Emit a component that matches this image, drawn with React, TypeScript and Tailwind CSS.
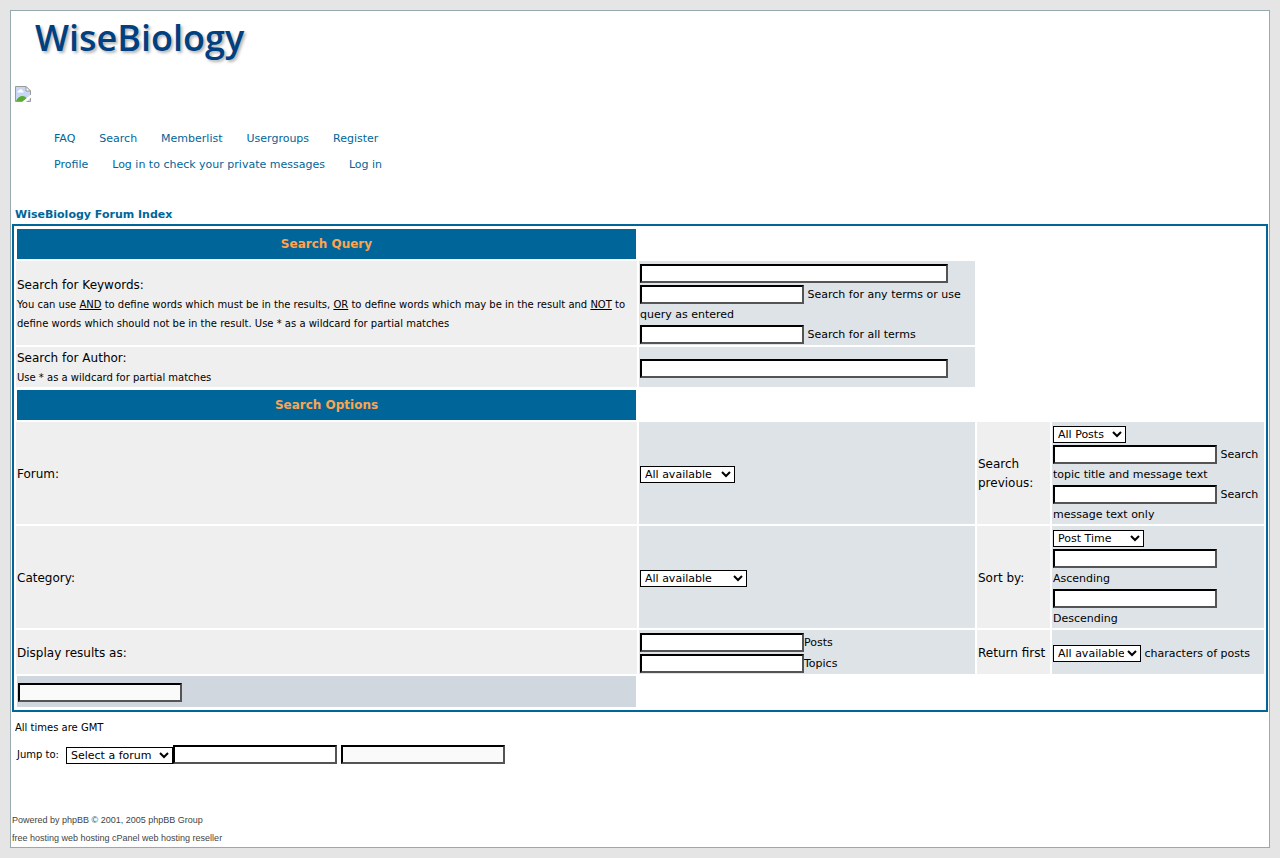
import type { ReactNode } from "react";

const inset =
  "my-px h-[19px] rounded-none border-2 border-t-black border-l-black border-r-[#545454] border-b-[#545454] px-px text-[11px] leading-[13px] align-baseline";
const select =
  "mt-[2px] mb-px h-[17px] rounded-none border border-black bg-white text-[11px] leading-[15px] align-baseline";
const nav = "text-[11px] text-[#006699] hover:underline";

function TextField({ id, label, wide, muted }: { id: string; label?: string; wide?: boolean; muted?: boolean }) {
  return (
    <input
      id={id}
      type="text"
      aria-label={label}
      className={`${inset} ${wide ? "w-[308px] max-w-full" : "w-[164px]"} ${muted ? "bg-[#fafafa]" : "bg-white"}`}
    />
  );
}

function HeadRow({ children }: { children: ReactNode }) {
  return (
    <tr>
      <th
        scope="colgroup"
        className="h-[31px] border border-b-0 border-white bg-[#006699] p-0 text-center text-[12px] font-bold text-[#ffa34f]"
      >
        {children}
      </th>
    </tr>
  );
}

function Cell({ light, children }: { light?: boolean; children: ReactNode }) {
  return (
    <td
      className={`px-px pt-[2px] pb-0 align-middle ${light ? "bg-[#efefef] text-[12px]" : "bg-[#dee3e7] text-[11px]"}`}
    >
      {children}
    </td>
  );
}

export default function App() {
  return (
    <div className="min-h-screen bg-[#e5e5e5] p-[10px] font-[Verdana,'DejaVu_Sans',sans-serif] text-[11px] leading-[19px] text-black">
      <div className="border border-[#98aab1] bg-white px-px">
        <header className="px-[3px]">
          <h1 className="pt-1 pl-5 font-['Trebuchet_MS','Open_Sans',sans-serif] text-[36px] leading-[46px] font-semibold text-[#004080] [text-shadow:2px_2px_3px_rgba(0,0,0,0.3)]">
            WiseBiology
          </h1>
          <a href="#index" aria-label="WiseBiology Forum Index" className="mt-[25px] block w-4">
            <svg width="16" height="16" viewBox="0 0 16 16">
              <path d="M.5.5H11L15.500 5v10.500H.5z" fill="#c6d6f4" stroke="#9a9a9a" />
              <path d="M2.500 6.500Q2 4.500 4 4.500Q4.500 3 6 3.200Q7.500 3.500 7.500 4.700Q9 5 8.500 6.500z" fill="#fff" />
              <path d="M1 15q2.500-5 6.500-5q3 0 4.500 3v2z" fill="#58ab32" />
              <path d="M11 .5V5h4.500z" fill="#fff" stroke="#9a9a9a" />
              <path d="M16 8.500v3L11 16H7z" fill="#fff" />
            </svg>
          </a>
          <nav className="mt-[23px] pl-[39px]">
            <div className="flex h-[26px] items-center gap-6">
              <a href="#faq" className={nav}>FAQ</a>
              <a href="#search" className={nav}>Search</a>
              <a href="#members" className={nav}>Memberlist</a>
              <a href="#groups" className={nav}>Usergroups</a>
              <a href="#register" className={nav}>Register</a>
            </div>
            <div className="flex h-[26px] items-center gap-6">
              <a href="#profile" className={nav}>Profile</a>
              <a href="#messages" className={nav}>Log in to check your private messages</a>
              <a href="#login" className={nav}>Log in</a>
            </div>
          </nav>
          <a href="#index" className="mt-7 block w-fit font-bold text-[#006699]">WiseBiology Forum Index</a>
        </header>

        <main>
          <form className="border-2 border-[#006699]">
            <table className="w-full table-fixed border-separate border-spacing-[2px]">
              <colgroup>
                <col />
                <col className="w-[336px]" />
                <col className="w-[73px]" />
                <col className="w-[212px]" />
              </colgroup>
              <tbody>
                <HeadRow>Search Query</HeadRow>
                <tr className="h-[84px]">
                  <Cell light>
                    <label htmlFor="keywords">Search for Keywords:</label>
                    <p className="text-[10px]">
                      You can use <u>AND</u> to define words which must be in the results, <u>OR</u> to define words
                      which may be in the result and <u>NOT</u> to define words which should not be in the result. Use
                      * as a wildcard for partial matches
                    </p>
                  </Cell>
                  <Cell>
                    <TextField id="keywords" wide />
                    <br />
                    <TextField id="any" /> <label htmlFor="any">Search for any terms or use query as entered</label>
                    <br />
                    <TextField id="all" /> <label htmlFor="all">Search for all terms</label>
                  </Cell>
                </tr>
                <tr className="h-[40px]">
                  <Cell light>
                    <label htmlFor="author">Search for Author:</label>
                    <p className="text-[10px]">Use * as a wildcard for partial matches</p>
                  </Cell>
                  <Cell>
                    <TextField id="author" wide />
                  </Cell>
                </tr>
                <HeadRow>Search Options</HeadRow>
                <tr className="h-[102px]">
                  <Cell light>
                    <label htmlFor="forum">Forum:</label>
                  </Cell>
                  <Cell>
                    <select id="forum" className={`${select} w-[95px]`}>
                      <option>All available</option>
                    </select>
                  </Cell>
                  <Cell light>
                    <label htmlFor="previous">Search previous:</label>
                  </Cell>
                  <Cell>
                    <select id="previous" className={`${select} w-[73px]`}>
                      <option>All Posts</option>
                    </select>
                    <br />
                    <TextField id="title" /> <label htmlFor="title">Search topic title and message text</label>
                    <br />
                    <TextField id="message" /> <label htmlFor="message">Search message text only</label>
                  </Cell>
                </tr>
                <tr className="h-[102px]">
                  <Cell light>
                    <label htmlFor="category">Category:</label>
                  </Cell>
                  <Cell>
                    <select id="category" className={`${select} w-[107px]`}>
                      <option>All available</option>
                    </select>
                  </Cell>
                  <Cell light>
                    <label htmlFor="sort">Sort by:</label>
                  </Cell>
                  <Cell>
                    <select id="sort" className={`${select} w-[91px]`}>
                      <option>Post Time</option>
                    </select>
                    <br />
                    <TextField id="asc" /> <label htmlFor="asc">Ascending</label>
                    <br />
                    <TextField id="desc" /> <label htmlFor="desc">Descending</label>
                  </Cell>
                </tr>
                <tr className="h-[44px]">
                  <Cell light>Display results as:</Cell>
                  <Cell>
                    <TextField id="posts" />
                    <label htmlFor="posts">Posts</label>
                    <br />
                    <TextField id="topics" />
                    <label htmlFor="topics">Topics</label>
                  </Cell>
                  <Cell light>
                    <label htmlFor="chars" className="whitespace-nowrap">Return first</label>
                  </Cell>
                  <Cell>
                    <select id="chars" className={`${select} w-[88px]`}>
                      <option>All available</option>
                    </select>{" "}
                    characters of posts
                  </Cell>
                </tr>
                <tr>
                  <td className="h-[32px] border border-t-0 border-white bg-[#d1d7de] px-px pt-[2px] pb-0 align-middle">
                    <TextField id="submit" label="Search" muted />
                  </td>
                </tr>
              </tbody>
            </table>
          </form>

          <p className="mt-[6px] px-[3px] text-[10px]">All times are GMT</p>
          <form className="mt-[7px] flex items-center px-[5px]">
            <label htmlFor="jump" className="mr-[7px] text-[10px]">Jump to:</label>
            <select id="jump" className={`${select} w-[107px]`}>
              <option>Select a forum</option>
            </select>
            <TextField id="sid" label="Session" />
            <span className="ml-1 flex">
              <TextField id="go" label="Go" muted />
            </span>
          </form>
        </main>

        <footer className="mt-[46px] font-['Liberation_Sans',sans-serif] text-[9px] leading-[18px] text-[#444444]">
          <p>Powered by phpBB © 2001, 2005 phpBB Group</p>
          <p>free hosting web hosting cPanel web hosting reseller</p>
        </footer>
      </div>
    </div>
  );
}
